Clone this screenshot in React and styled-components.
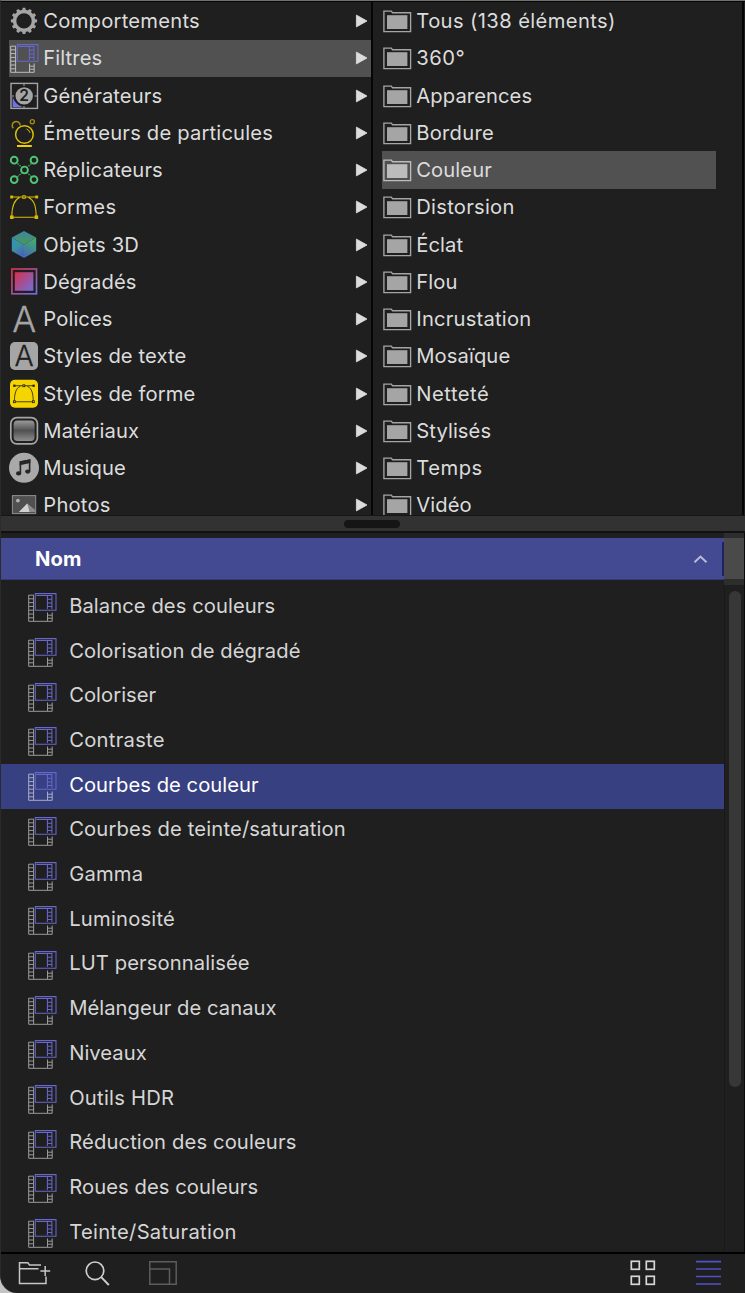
import React from "react";
import styled, { createGlobalStyle } from "styled-components";

const Global = createGlobalStyle`
  html, body { margin: 0; padding: 0; background: #1f1f1f; }
  * { box-sizing: border-box; }
`;

const Window = styled.div`
  width: 745px;
  height: 1293px;
  display: flex;
  flex-direction: column;
  overflow: hidden;
  background: #1f1f1f;
  border-top: 1px solid #70726e;
  border-left: 1px solid #2b2b2b;
  border-bottom-left-radius: 17px;
  font-family: Inter, "Liberation Sans", sans-serif;
  font-size: 20.2px;
  font-weight: 400;
  color: #dcdcdc;
`;

const Desktop = styled.div`
  background: #c4c4c4;
`;

const Browser = styled.div`
  display: flex;
  height: 514px;
  border-top: 1px solid #050505;
  flex: none;
`;

const Categories = styled.ul`
  list-style: none;
  margin: 0;
  padding: 0.4px 0 0 8px;
  width: 370px;
  overflow: hidden;
`;

const Folders = styled.ul`
  list-style: none;
  margin: 0;
  padding: 0.4px 26px 0 9px;
  width: 372.5px;
  overflow: hidden;
  border-left: 2px solid #060606;
  border-right: 2px solid #060606;
`;

const BrowserRow = styled.li`
  display: flex;
  align-items: center;
  height: 37.26px;
  gap: 4.3px;
  background: ${(p) => (p.$on ? "#515151" : "transparent")};
  --ink: ${(p) => (p.$on ? "#bcbcbc" : "#a5a5a5")};
  svg { flex: none; overflow: visible; }
`;

const Label = styled.span`
  flex: 1;
  white-space: nowrap;
  line-height: 24px;
  letter-spacing: ${(p) => p.$track || 0}px;
`;

const Splitter = styled.div`
  flex: none;
  height: 18px;
  display: flex;
  justify-content: center;
  align-items: center;
  padding-right: 2px;
  background: #323232;
  border-top: 1.5px solid #161616;
  border-bottom: 2px solid #111;
`;

const Grip = styled.div`
  width: 56px;
  height: 8px;
  border-radius: 4px;
  background: #151515;
`;

const Files = styled.div`
  flex: none;
  height: 719px;
  display: flex;
  border-right: 1px solid #0a0a0a;
  overflow: hidden;
`;

const Table = styled.div`
  width: 723px;
  padding-top: 5px;
`;

const TableHead = styled.div`
  height: 42px;
  display: flex;
  align-items: center;
  padding: 0 0 0 34px;
  background: #434a91;
  border-bottom: 1px solid #35397a;
  color: #fff;
  font-weight: 700;
`;

const HeadRule = styled.div`
  width: 2px;
  height: 34px;
  margin-left: 14px;
  background: #1f2560;
`;

const FileRow = styled.div`
  height: 44.71px;
  display: flex;
  align-items: center;
  padding: 0 0 0 26.4px;
  gap: 11.8px;
  color: ${(p) => (p.$on ? "#fff" : "#d6d6d6")};
  background: ${(p) => (p.$on ? "#374080" : "transparent")};
  --ink: ${(p) => (p.$on ? "#a9abc6" : "#9a9a9a")};
`;

const FileLabel = styled(Label)`
  padding-bottom: 3px;
`;

const FileList = styled.div`
  padding-top: 5px;
`;

const ScrollColumn = styled.div`
  flex: 1;
  display: flex;
  flex-direction: column;
`;

const Corner = styled.div`
  height: 52px;
  background: #4a4a4a;
  border-top: 5px solid #2d2d2d;
  border-bottom: 6px solid #2d2d2d;
`;

const Track = styled.div`
  flex: 1;
  padding: 6px 3px 0 4px;
  border-left: 1px solid #191919;
`;

const Thumb = styled.div`
  width: 12px;
  height: 496px;
  border-radius: 6px;
  background: #373737;
`;

const Footer = styled.div`
  flex: 1;
  display: flex;
  align-items: center;
  padding: 0 24.5px 2px 16px;
  border-top: 2px solid #000;
  svg { flex: none; overflow: visible; }
`;

const Spacer = styled.div`
  flex: ${(p) => (p.$w ? `0 0 ${p.$w}px` : 1)};
`;

const Icon = ({ children, w = 30, h = 30 }) => (
  <svg width={w} height={h} viewBox={`0 0 ${w} ${h}`} fill="none">{children}</svg>
);

const teeth = Array.from({ length: 12 }, (_, i) => i * 30);

const Gear = () => (
  <Icon>
    <circle cx="15" cy="14.9" r="9.4" stroke="#a5a5a5" strokeWidth="3.4" />
    {teeth.map((a) => (
      <path key={a} d="M13.1 4.6L13.7 1.8H16.3L16.9 4.6Z" transform={`rotate(${a} 15 14.9)`} fill="#a5a5a5" />
    ))}
  </Icon>
);

const rungs = [6.8, 10.6, 14.4, 18.2, 22, 25.8];

const Film = () => (
  <Icon>
    <path d="M1.7 3.2H7M1.7 3V29.3H25.2V20.5M20.5 20.5V29M6.6 3.5V29" stroke="var(--ink)" strokeWidth="1" />
    {rungs.map((y) => <path key={y} d={`M1.7 ${y}H6.6`} stroke="var(--ink)" strokeWidth="1" />)}
    <path d="M20.5 23.2H25.2M20.5 26.2H25.2" stroke="var(--ink)" strokeWidth="1" />
    <path d="M8.3 1.6H29V18.3H8.3ZM9.3 3.5H24.9V17M20.4 3.5V17M20.4 7.2H24.9M20.4 10.9H24.9M20.4 14.4H24.9" stroke="#6767cc" strokeWidth="1.05" />
  </Icon>
);

const Generator = () => (
  <Icon>
    <rect x="2" y="2.4" width="26.5" height="25" stroke="#a5a5a5" strokeWidth="1.4" />
    <path d="M15 3V5M15 25V27M3 15H5M25.5 15H28" stroke="#a5a5a5" />
    <path d="M3.6 15Q5.2 23.4 14 26.2H3.6Z" fill="#7273e0" />
    <circle cx="15.2" cy="14.9" r="8.7" fill="#a5a5a5" />
    <text x="15.2" y="20.4" textAnchor="middle" fontSize="15.5" fontWeight="600" fill="#1f1f1f">2</text>
  </Icon>
);

const Emitter = () => (
  <Icon>
    <circle cx="15.4" cy="16.5" r="8.8" stroke="#dcc006" strokeWidth="1.5" />
    <path d="M4.3 10.2A4 4 0 1 1 11.2 7.4" stroke="#a58f0c" strokeWidth="1.5" />
    <circle cx="23.3" cy="3.7" r="2.1" stroke="#a58f0c" strokeWidth="1.3" />
    <path d="M17.5 11Q20.3 12 21 14.8" stroke="#dcc006" strokeWidth="1" />
    <path d="M8 27.9H22.8" stroke="#f0d000" strokeWidth="2" />
  </Icon>
);

const Replicator = () => (
  <Icon>
    <path d="M8.5 8.4L13 12.6M22.5 8.4L18 12.6M8.5 21.7L13 17.6M22.5 21.7L18 17.6" stroke="#41a961" strokeWidth="1.3" strokeDasharray="1.6 1" />
    {[[5.2, 5.2], [25, 5.2], [15.5, 15], [5.2, 24.6], [25, 24.6]].map(([x, y]) => (
      <circle key={`${x}-${y}`} cx={x} cy={y} r="3.4" stroke="#50c474" strokeWidth="1.9" />
    ))}
  </Icon>
);

const Arch = ({ c, knot, bg }) => (
  <g stroke={c} strokeWidth="1.1">
    <path d="M2.5 5H28M3.5 25.3H27M2.8 24.5C2.9 16 4 8.5 10.5 5.6M27.2 24.5C27 16 26 8.5 19.5 5.6" />
    <rect x="1.8" y="4.1" width="1.8" height="1.8" fill={c} />
    <rect x="26.8" y="4.1" width="1.8" height="1.8" fill={c} />
    <rect x="13.8" y="3.8" width="2.4" height="2.4" fill={bg} />
    <rect x="1.6" y="24" width="2.4" height="2.4" fill={knot} />
    <rect x="26.2" y="24" width="2.4" height="2.4" fill={knot} />
  </g>
);

const Shape = () => <Icon><Arch c="#d9bd05" knot="#d9bd05" bg="#1f1f1f" /></Icon>;

const Cube = () => (
  <Icon>
    <defs>
      <linearGradient id="cl" x1="0" y1="0" x2="0.5" y2="1"><stop stopColor="#2f92c9" /><stop offset="0.5" stopColor="#3c92a0" /><stop offset="1" stopColor="#4567b8" /></linearGradient>
      <linearGradient id="cr" x1="0.5" y1="0" x2="0.2" y2="1"><stop stopColor="#43aa72" /><stop offset="1" stopColor="#4667b4" /></linearGradient>
      <linearGradient id="ct" x1="0.5" y1="0" x2="0.5" y2="1"><stop stopColor="#3b83a8" /><stop offset="1" stopColor="#4a9b50" /></linearGradient>
    </defs>
    <path d="M15 1L27.2 7.6L15 14.4L2.8 7.6Z" fill="url(#ct)" />
    <path d="M2.8 7.6L15 14.4V28L2.8 21.1Z" fill="url(#cl)" />
    <path d="M27.2 7.6L15 14.4V28L27.2 21.1Z" fill="url(#cr)" />
  </Icon>
);

const Gradient = () => (
  <Icon>
    <defs>
      <linearGradient id="gr" x1="0" y1="0" x2="1" y2="1"><stop stopColor="#d8304d" /><stop offset="1" stopColor="#706fdd" /></linearGradient>
    </defs>
    <rect x="2.9" y="2" width="24.6" height="24.8" stroke="url(#gr)" strokeWidth="1.7" />
    <rect x="5.8" y="5.2" width="18.6" height="18.6" fill="url(#gr)" />
  </Icon>
);

const Letter = () => (
  <Icon><text x="15.1" y="27.6" textAnchor="middle" fontSize="35.5" fontWeight="300" fill="#a5a5a5" stroke="#a5a5a5" strokeWidth="0.3">A</text></Icon>
);

const TextStyle = () => (
  <Icon>
    <rect x="1" y="1" width="28" height="28" rx="5" fill="#a5a5a5" />
    <text x="15.1" y="25.2" textAnchor="middle" fontSize="28.5" fontWeight="300" fill="#1f1f1f" stroke="#1f1f1f" strokeWidth="0.3">A</text>
  </Icon>
);

const ShapeStyle = () => (
  <Icon>
    <rect x="1" y="0.8" width="28" height="28" rx="5" fill="#f4d500" />
    <g transform="translate(3.3 2.8) scale(0.77 0.79)"><Arch c="#2b2710" knot="#f4d500" bg="#f4d500" /></g>
  </Icon>
);

const Material = () => (
  <Icon>
    <defs>
      <linearGradient id="mt" x1="0" y1="0" x2="0" y2="1"><stop stopColor="#9b9b9b" /><stop offset="0.5" stopColor="#505050" /><stop offset="1" stopColor="#8e8e8e" /></linearGradient>
    </defs>
    <rect x="1.8" y="1.6" width="26.6" height="26.2" rx="6" stroke="#a5a5a5" strokeWidth="1.7" />
    <rect x="4.6" y="4.4" width="21" height="20.6" rx="4" fill="url(#mt)" />
  </Icon>
);

const Music = () => (
  <Icon>
    <circle cx="15" cy="14.8" r="15" fill="#a9a9a9" />
    <path d="M11.4 20V9L20.6 7.2V18.2" stroke="#252525" strokeWidth="1.6" />
    <path d="M10.7 8.5L21.4 6.3V10L10.7 12.2Z" fill="#252525" />
    <ellipse cx="9.6" cy="20.4" rx="2.6" ry="2.1" fill="#252525" />
    <ellipse cx="18.7" cy="18.6" rx="2.6" ry="2.1" fill="#252525" />
  </Icon>
);

const Photo = () => (
  <Icon>
    <rect x="3.4" y="5.6" width="23.3" height="18" fill="#505050" stroke="#8f8f8f" />
    <circle cx="8.9" cy="10.6" r="1.9" fill="#b0b0b0" />
    <path d="M10 22L18.3 13.4L26.2 20V22H10Z" fill="#8b8b8b" />
    <path d="M10 22L18.3 13.4L20.5 22Z" fill="#d2d2d2" />
  </Icon>
);

const Folder = () => (
  <Icon>
    <path d="M1.9 5.1H9.3L10.5 6.7H28.6V25.6H1.9Z" stroke="var(--ink)" strokeWidth="1.35" />
    <rect x="5" y="9.2" width="20.4" height="13.8" fill="var(--ink)" />
  </Icon>
);

const Arrow = () => (
  <svg width="17" height="14" viewBox="0 0 17 14"><path d="M2.4 1.1V12.9L13 7Z" fill="#dcdcdc" stroke="#dcdcdc" strokeWidth="0.8" strokeLinejoin="round" /></svg>
);

const categories = [
  ["Comportements", Gear, 0.24], ["Filtres", Film], ["Générateurs", Generator],
  ["Émetteurs de particules", Emitter, 0.18], ["Réplicateurs", Replicator, 0.13], ["Formes", Shape, 0.3],
  ["Objets 3D", Cube, 0.17], ["Dégradés", Gradient], ["Polices", Letter], ["Styles de texte", TextStyle],
  ["Styles de forme", ShapeStyle], ["Matériaux", Material], ["Musique", Music], ["Photos", Photo, 0.2],
];

const folders = [
  ["Tous (138 éléments)", 0.38], ["360°", 0.5], ["Apparences"], ["Bordure", 0.25], ["Couleur"],
  ["Distorsion", 0.25], ["Éclat"], ["Flou"], ["Incrustation", 0.2], ["Mosaïque"], ["Netteté", 0.5],
  ["Stylisés"], ["Temps", 0.5], ["Vidéo"],
];

const files = [
  ["Balance des couleurs", 0.07], ["Colorisation de dégradé", 0.09], ["Coloriser"], ["Contraste", 0.28],
  ["Courbes de couleur"], ["Courbes de teinte/saturation", 0.15], ["Gamma", 0.2], ["Luminosité", 0.22],
  ["LUT personnalisée", 0.1], ["Mélangeur de canaux"], ["Niveaux"], ["Outils HDR", 0.24],
  ["Réduction des couleurs", 0.13], ["Roues des couleurs", 0.07], ["Teinte/Saturation", 0.28],
];

export default function App() {
  return (
    <Desktop>
      <Global />
      <Window>
        <Browser>
          <Categories>
            {categories.map(([name, Glyph, track = 0.1]) => (
              <BrowserRow key={name} $on={name === "Filtres"}>
                <Glyph /><Label $track={track}>{name}</Label><Arrow />
              </BrowserRow>
            ))}
          </Categories>
          <Folders>
            {folders.map(([name, track = 0.08]) => (
              <BrowserRow key={name} $on={name === "Couleur"}>
                <Folder /><Label $track={track}>{name}</Label>
              </BrowserRow>
            ))}
          </Folders>
        </Browser>
        <Splitter><Grip /></Splitter>
        <Files>
          <Table>
            <TableHead>
              <Label $track={0.1}>Nom</Label>
              <svg width="15" height="10" viewBox="0 0 15 10" fill="none"><path d="M1.5 8.3L7.5 2.6L13.5 8.3" stroke="#b9bbd8" strokeWidth="2" /></svg>
              <HeadRule />
            </TableHead>
            <FileList>
              {files.map(([name, track = 0.04]) => (
                <FileRow key={name} $on={name === "Courbes de couleur"}>
                  <Film /><FileLabel $track={track}>{name}</FileLabel>
                </FileRow>
              ))}
            </FileList>
          </Table>
          <ScrollColumn>
            <Corner />
            <Track><Thumb /></Track>
          </ScrollColumn>
        </Files>
        <Footer>
          <Icon w={33} h={26}>
            <path d="M24 5H12.5L10.8 2.8H2.5V23.5H29V16.5M2.5 8.8H21.5M28.2 6V16M23.4 11H33.2" stroke="#c6c6c6" strokeWidth="1.5" />
          </Icon>
          <Spacer $w={34} />
          <Icon w={26} h={26}>
            <circle cx="11" cy="10.8" r="8.8" stroke="#cfcfcf" strokeWidth="1.7" />
            <path d="M17.2 17.2L24.8 25" stroke="#cfcfcf" strokeWidth="1.9" />
          </Icon>
          <Spacer $w={39} />
          <Icon w={28} h={24}>
            <path d="M0.8 0.8H27.2V23.2H0.8ZM1 8H20.5V23" stroke="#5c5c5c" strokeWidth="1.5" />
          </Icon>
          <Spacer />
          <Icon w={26} h={26}>
            {[[1, 1], [16, 1], [1, 16], [16, 16]].map(([x, y]) => (
              <rect key={`${x}-${y}`} x={x + 0.3} y={y + 0.3} width="8" height="8" stroke="#d6d6d6" strokeWidth="1.7" />
            ))}
          </Icon>
          <Spacer $w={40} />
          <Icon w={25} h={26}>
            <path d="M0 1.6H25M0 9H25M0 16.5H25M0 24H25" stroke="#5051c9" strokeWidth="1.7" />
          </Icon>
        </Footer>
      </Window>
    </Desktop>
  );
}
